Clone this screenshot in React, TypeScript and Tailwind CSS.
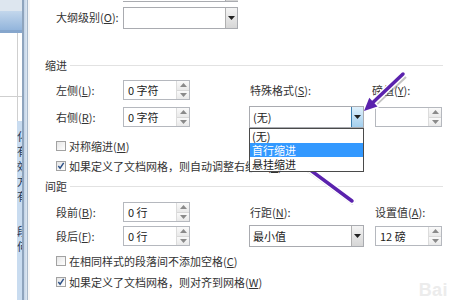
import React from "react"

const font = { fontFamily: '"Noto Sans CJK SC", "Noto Sans", sans-serif' }

function Tri({ up = false, color = "#222" }: { up?: boolean; color?: string }) {
  return (
    <svg width="7" height="4" viewBox="0 0 7 4">
      <path d={up ? "M0 4h7L3.5 0z" : "M0 0h7L3.5 4z"} fill={color} />
    </svg>
  )
}

function Spin({ value }: { value: string }) {
  return (
    <div className="w-[67px] h-[20px] flex border border-[#b5b8be] bg-white">
      <div className="flex-1 pl-[4px] text-[11px] leading-[18px] text-[#222]">{value}</div>
      <div className="w-[13px] flex flex-col border-l border-[#dcdcdc]">
        <div className="flex-1 flex items-center justify-center bg-gradient-to-b from-[#fafafa] to-[#e9e9e9] border-b border-[#d8d8d8]">
          <Tri up color="#8a8a8a" />
        </div>
        <div className="flex-1 flex items-center justify-center bg-gradient-to-b from-[#fafafa] to-[#e9e9e9]">
          <Tri color="#8a8a8a" />
        </div>
      </div>
    </div>
  )
}

function Select({ value, open = false }: { value: string; open?: boolean }) {
  return (
    <div className="w-[115px] h-[22px] flex border border-[#a9abb0] bg-white">
      <div className="flex-1 pl-[3px] text-[11px] leading-[20px] text-[#222]">{value}</div>
      {open ? (
        <div className="w-[12px] flex items-center justify-center border-l border-[#3c7fb1] bg-gradient-to-b from-[#dff0fb] to-[#a3cfee]">
          <Tri />
        </div>
      ) : (
        <div className="w-[12px] flex items-center justify-center border-l border-[#b0b0b0] bg-gradient-to-b from-[#f4f4f4] to-[#d6d6d6]">
          <Tri />
        </div>
      )}
    </div>
  )
}

function Check({ checked = false, children }: { checked?: boolean; children: React.ReactNode }) {
  return (
    <div className="h-[14px] ml-[26px] flex items-center gap-[3px] text-[11px] text-[#333] whitespace-nowrap">
      <div className="w-[10px] h-[10px] border border-[#a2a2a2] bg-gradient-to-br from-[#e6e6e6] to-[#ffffff] flex items-center justify-center">
        {checked && (
          <svg width="8" height="8" viewBox="0 0 9 9">
            <path d="M1.5 4.5l2 2.5 4-6" stroke="#2b4f86" strokeWidth="1.6" fill="none" />
          </svg>
        )}
      </div>
      <span>{children}</span>
    </div>
  )
}

function Header({ children }: { children: React.ReactNode }) {
  return (
    <div className="h-[14px] ml-[15px] flex items-center gap-[3px] text-[11px] text-[#333]">
      <span>{children}</span>
      <div className="flex-1 mr-[7px] h-px bg-[#e2e2e2]" />
    </div>
  )
}

function Label({ children, className = "w-[67px]" }: { children: React.ReactNode; className?: string }) {
  return <div className={`${className} text-[11px] text-[#333] whitespace-nowrap`}>{children}</div>
}

function LeftStrip() {
  return (
    <div className="w-[30px] h-full flex shrink-0">
      <div className="w-[17px] flex flex-col">
        <div className="h-[11px] bg-[#dde6ef]" />
        <div className="h-[19px] bg-gradient-to-b from-[#c3d7ec] to-[#93b5dc]" />
        <div className="h-[3px] bg-[#86a6cc]" />
        <div className="h-[64px] bg-white border-b border-[#cfcfcf]" />
        <div className="flex-1 bg-white" />
      </div>
      <div className="w-[5px] flex flex-col">
        <div className="h-[11px] bg-[#dde6ef]" />
        <div className="h-[19px] bg-gradient-to-b from-[#c3d7ec] to-[#93b5dc]" />
        <div className="h-[3px] bg-[#86a6cc]" />
        <div className="h-[64px] bg-white border-b border-l border-[#cfcfcf]" />
        <div className="h-[24px] bg-white border-l border-[#cfcfcf]" />
        <div className="flex-1 bg-[#c9dcf0] overflow-hidden">
          <div className="w-[12px] flex flex-col text-[11px] leading-[15px] text-[#2a3a55] pt-[8px]">
            <span>化</span>
            <span>有</span>
            <span>效</span>
            <span>方</span>
            <span>有</span>
            <span className="mt-[20px]">段</span>
            <span>何</span>
          </div>
        </div>
      </div>
      <div className="w-[2px] bg-[#8ea4bd]" />
      <div className="w-[3px] bg-gradient-to-r from-[#c3d3e6] to-[#dde8f3]" />
      <div className="w-[1px] bg-[#a9b9cb]" />
      <div className="w-[2px] bg-[#f6f6f6]" />
    </div>
  )
}

function Arrows() {
  return (
    <svg className="absolute inset-0 pointer-events-none" width="450" height="300" viewBox="0 0 450 300">
      <g opacity="0.35" transform="translate(2 2)">
        <line x1="403" y1="74" x2="373" y2="102" stroke="#555" strokeWidth="5" />
        <line x1="352" y1="201" x2="304" y2="166" stroke="#555" strokeWidth="5" />
      </g>
      <line x1="403" y1="74" x2="373.4" y2="102.1" stroke="#fff" strokeWidth="6.5" strokeLinecap="round" />
      <polygon points="364,111 377.5,106.5 369.3,97.7" fill="#fff" stroke="#fff" strokeWidth="3" strokeLinejoin="round" />
      <line x1="403" y1="74" x2="373.4" y2="102.1" stroke="#5a22ad" strokeWidth="3.5" strokeLinecap="round" />
      <polygon points="364,111 377.5,106.5 369.3,97.7" fill="#5a22ad" />
      <line x1="352" y1="201" x2="304.4" y2="165.7" stroke="#fff" strokeWidth="6.5" strokeLinecap="round" />
      <polygon points="294,158 308,160.9 300.8,170.5" fill="#fff" stroke="#fff" strokeWidth="3" strokeLinejoin="round" />
      <line x1="352" y1="201" x2="304.4" y2="165.7" stroke="#5a22ad" strokeWidth="3.5" strokeLinecap="round" />
      <polygon points="294,158 308,160.9 300.8,170.5" fill="#5a22ad" />
    </svg>
  )
}

export default function App() {
  return (
    <div className="w-[450px] h-[300px] overflow-hidden relative flex bg-white" style={font}>
      <LeftStrip />
      <div className="flex-1 flex flex-col">
        {/* bottom edge of the field above */}
        <div className="h-[2px] ml-[93px] w-[115px] flex">
          <div className="flex-1 border-b border-[#a9abb0]" />
          <div className="w-[13px] bg-[#d6d6d6] border-b border-l border-[#a9abb0]" />
        </div>

        <div className="mt-[5px] h-[21px] ml-[26px] flex items-center">
          <Label>
            大纲级别(<u>O</u>):
          </Label>
          <Select value="" />
        </div>

        <div className="mt-[30px]">
          <Header>缩进</Header>
        </div>

        <div className="mt-[7px] h-[22px] ml-[26px] flex items-center">
          <Label>
            左侧(<u>L</u>):
          </Label>
          <Spin value="0 字符" />
          <Label className="ml-[60px] w-[122px]">
            特殊格式(<u>S</u>):
          </Label>
          <Label className="w-[60px]">
            磅值(<u>Y</u>):
          </Label>
        </div>

        <div className="mt-[5px] h-[22px] ml-[26px] flex items-center">
          <Label>
            右侧(<u>R</u>):
          </Label>
          <Spin value="0 字符" />
          <div className="ml-[59px] relative z-10">
            <Select value="(无)" open />
            <div className="absolute left-0 top-full w-[115px] border border-[#4a4a4a] bg-white text-[11px] leading-[14px] text-[#222]">
              <div className="pl-[2px] h-[14px]">(无)</div>
              <div className="pl-[2px] h-[14px] bg-[#3399ff] text-white">首行缩进</div>
              <div className="pl-[2px] h-[14px]">悬挂缩进</div>
            </div>
          </div>
          <div className="ml-[11px]">
            <Spin value="" />
          </div>
        </div>

        <div className="mt-[11px]">
          <Check>
            对称缩进(<u>M</u>)
          </Check>
        </div>
        <div className="mt-[6px]">
          <Check checked>如果定义了文档网格，则自动调整右缩进(<u>D</u>)</Check>
        </div>

        <div className="mt-[6px]">
          <Header>间距</Header>
        </div>

        <div className="mt-[8px] h-[22px] ml-[26px] flex items-center">
          <Label>
            段前(<u>B</u>):
          </Label>
          <Spin value="0 行" />
          <Label className="ml-[60px] w-[125px]">
            行距(<u>N</u>):
          </Label>
          <Label className="w-[60px]">
            设置值(<u>A</u>):
          </Label>
        </div>

        <div className="mt-[2px] h-[22px] ml-[26px] flex items-center">
          <Label>
            段后(<u>F</u>):
          </Label>
          <Spin value="0 行" />
          <div className="ml-[59px]">
            <Select value="最小值" />
          </div>
          <div className="ml-[11px]">
            <Spin value="12 磅" />
          </div>
        </div>

        <div className="mt-[7px]">
          <Check>
            在相同样式的段落间不添加空格(<u>C</u>)
          </Check>
        </div>
        <div className="mt-[7px]">
          <Check checked>
            如果定义了文档网格，则对齐到网格(<u>W</u>)
          </Check>
        </div>
      </div>

      <div className="absolute right-[2px] bottom-[-4px] text-[18px] font-bold text-[#ececec] tracking-wide" style={{ fontFamily: '"Liberation Sans", sans-serif' }}>
        Bai
      </div>
      <Arrows />
    </div>
  )
}
